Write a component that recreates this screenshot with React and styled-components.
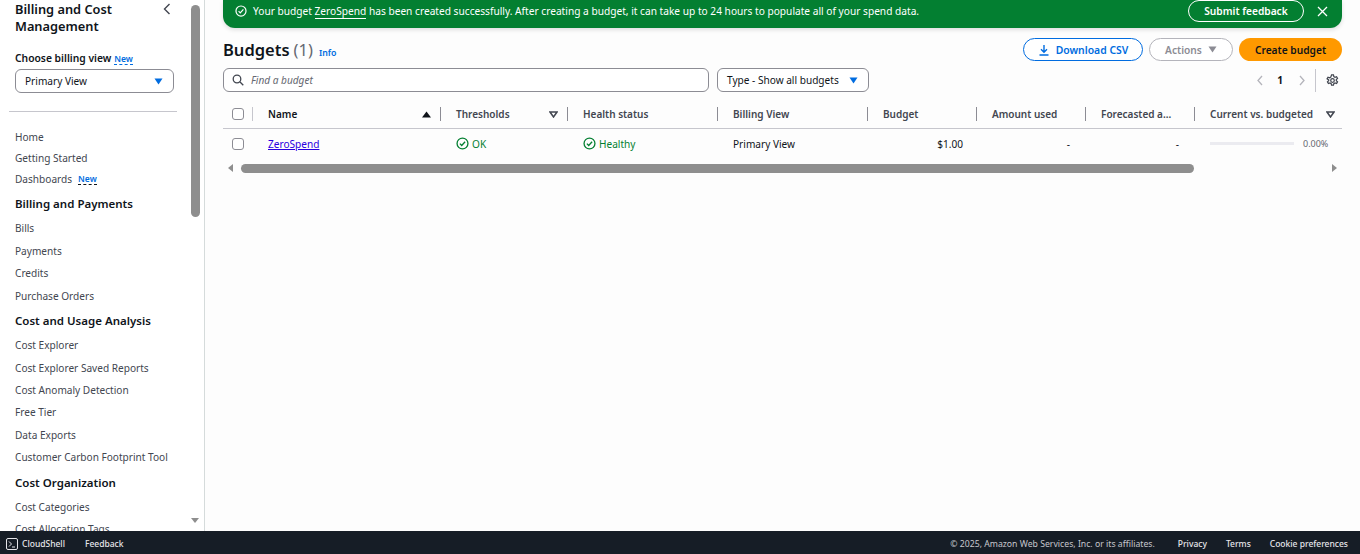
import React from "react";
import styled, { createGlobalStyle } from "styled-components";

const Global = createGlobalStyle`
  html, body { margin: 0; padding: 0; height: 100%; overflow: hidden; }
  body { font-family: "Noto Sans", "Open Sans", sans-serif; font-size: 10.1px; color: #16191f; background: #fdfdfd; }
  #root { height: 100%; }
`;
const Page = styled.div`display: flex; flex-direction: column; width: 1360px; height: 554px;`;
const Body = styled.div`display: flex; height: 531px; overflow: hidden;`;

const Side = styled.aside`position: relative; flex: 0 0 205px; height: 531px; box-sizing: border-box; overflow: hidden; background: #fff; border-right: 1px solid #d5dbdb; padding: 1px 0 0 15px;`;
const TitleRow = styled.div`display: flex; justify-content: space-between; width: 157px;`;
const Title = styled.h1`margin: 0; font-size: 12.8px; line-height: 17px; font-weight: 600; color: #0f141a; width: 130px;`;
const Back = styled.svg`width: 10px; height: 12px; margin-top: 2px; flex: none;`;
const ViewLabel = styled.div`display: flex; align-items: baseline; gap: 3px; margin-top: 16px; font-size: 10.3px; line-height: 15px; font-weight: 600; color: #0f141a;`;
const NewTag = styled.span`font-size: 8.5px; font-weight: 600; line-height: 11px; color: #006ce0; border-bottom: 1px dashed ${(p) => (p.$dark ? "#0f141a" : "#006ce0")}; margin-left: ${(p) => p.$gap || 0}px;`;
const Select = styled.div`box-sizing: border-box; display: flex; align-items: center; justify-content: space-between; height: 24px; border: 1px solid #8c8c94; border-radius: 6px; background: #fff; color: #0f141a; font-size: 10.1px; white-space: nowrap; padding: 0 10px 0 9px; width: ${(p) => p.$w}px; gap: 8px;`;
const ViewSelect = styled(Select)`margin-top: 3px;`;
const Caret = styled.svg`width: 9px; height: 7px; flex: none;`;
const Rule = styled.hr`margin: 18px 0 0 -6px; width: 168px; border: 0; border-top: 1px solid #c6c6cd;`;
const Nav = styled.nav`display: flex; flex-direction: column; margin-top: 14.8px;`;
const NavLink = styled.a`display: flex; align-items: center; height: ${(p) => p.$h || 22.45}px; font-size: 10.1px; color: #424650; white-space: nowrap;`;
const NavHead = styled.div`display: flex; align-items: center; height: 27.2px; font-size: 11.5px; font-weight: 600; color: #0f141a; white-space: nowrap;`;
const ScrollTrack = styled.div`position: absolute; top: 0; right: 4px; width: 10px; height: 531px;`;
const Thumb = styled.div`position: absolute; top: 5px; left: 1px; width: 9px; height: 212px; border-radius: 5px; background: #8e8e8e;`;
const ArrowDown = styled.div`position: absolute; top: 518px; left: 1px; width: 0; height: 0; border-left: 4.5px solid transparent; border-right: 4.5px solid transparent; border-top: 5px solid #8e8e8e;`;

const Main = styled.main`flex: 1; box-sizing: border-box; padding: 0 18px; background: #fdfdfd; min-width: 0;`;
const Flash = styled.div`display: flex; align-items: center; height: 28px; box-sizing: border-box; background: #037f31; color: #fff; border-radius: 0 0 12px 12px; padding: 0 12px 6px 12px; font-size: 10.17px; box-shadow: 0 2px 4px rgba(0,0,0,.12);`;
const FlashText = styled.span`margin-left: 6px; flex: 1; white-space: nowrap;`;
const FlashLink = styled.span`border-bottom: 1px solid #fff;`;
const Feedback = styled.div`box-sizing: border-box; width: 116px; height: 22px; margin-top: -1px; border: 1px solid #fff; border-radius: 12px; display: flex; align-items: center; justify-content: center; font-weight: 600; font-size: 10.2px;`;
const Close = styled.svg`width: 11px; height: 11px; margin: 0 2px 0 13px;`;
const HeadRow = styled.div`display: flex; align-items: center; justify-content: space-between; margin-top: 10px; height: 23px;`;
const Heading = styled.div`display: flex; align-items: baseline;`;
const H2 = styled.h2`margin: 0; font-size: 16.5px; font-weight: 600; color: #0f141a; line-height: 22px;`;
const Count = styled.span`font-size: 16.5px; color: #656871; margin-left: 4px;`;
const Info = styled.span`font-size: 8.8px; font-weight: 600; color: #006ce0; margin-left: 6px;`;
const Buttons = styled.div`display: flex; gap: 6px;`;
const Btn = styled.div`box-sizing: border-box; height: 23px; border-radius: 12px; display: flex; align-items: center; justify-content: center; gap: 6px; font-weight: 600; font-size: 10.2px; width: ${(p) => p.$w}px;
  ${(p) => p.$kind === "blue" && "border: 1px solid #006ce0; color: #006ce0; background: #fff; font-size: 10.4px;"}
  ${(p) => p.$kind === "off" && "border: 1px solid #b4b4bb; color: #8c8c94; background: #fff;"}
  ${(p) => p.$kind === "primary" && "background: #ff9900; color: #0f141a;"}
`;
const Tools = styled.div`display: flex; align-items: center; margin-top: 7px; height: 24px;`;
const Search = styled.div`box-sizing: border-box; display: flex; align-items: center; gap: 7px; width: 486px; height: 24px; border: 1px solid #8c8c94; border-radius: 6px; padding-left: 8px; background: #fff; font-style: italic; font-size: 10.1px; color: #656871;`;
const Filter = styled(Select)`margin-left: 8px;`;
const Pager = styled.div`margin-left: auto; display: flex; align-items: center; height: 24px; color: #0f141a; font-weight: 700; font-size: 10.1px;`;
const Chev = styled.svg`width: 8px; height: 11px;`;
const PageNum = styled.span`margin: 0 15px 0 13px;`;
const PagerRule = styled.span`width: 1px; height: 23px; background: #c6c6cd; margin: 0 10px 0 9px;`;
const Gear = styled.svg`width: 13px; height: 13px; margin-right: 3px;`;

const Table = styled.div`display: grid; grid-template-columns: 31px 187px 127px 150px 150px 109px 109px 109px 147px; width: 1119px; margin-top: 8px; overflow: hidden;`;
const Th = styled.div`box-sizing: border-box; position: relative; display: flex; align-items: center; justify-content: space-between; height: 29px; padding: 0 ${(p) => p.$pr ?? 10}px 0 ${(p) => p.$pl ?? 15}px; border-bottom: 1px solid #c6c6cd; font-weight: 600; font-size: 10px; white-space: nowrap; color: ${(p) => (p.$dark ? "#0f141a" : "#424650")};
  &::after { content: ""; display: ${(p) => (p.$last ? "none" : "block")}; position: absolute; right: ${(p) => (p.$light ? 1 : 0)}px; top: 7px; width: 1px; height: 14px; background: ${(p) => (p.$light ? "#c6c6cd" : "#8c8c94")}; }
`;
const Td = styled.div`box-sizing: border-box; display: flex; align-items: center; height: 31px; padding: 0 16px 2px 15px; gap: 3px; font-size: 10.1px; color: #0f141a; white-space: nowrap; justify-content: ${(p) => (p.$right ? "flex-end" : "flex-start")}; ${(p) => p.$green && "color: #037f31;"}`;
const CheckCell = styled(Td)`padding-right: 0;`;
const NameCell = styled(Td)`padding-left: 14px;`;
const Check = styled.span`display: block; flex: none; box-sizing: border-box; width: 12px; height: 12px; border: 1px solid #8c8c94; border-radius: 3px; background: #fff; margin-left: -6px;`;
const Link = styled.a`color: #2a00e0; text-decoration: underline;`;
const Bar = styled.div`flex: 1; height: 3px; background: #ebebf0; max-width: 84px;`;
const Pct = styled.span`font-size: 9px; color: #656871; margin-left: 6px;`;
const BudgetCell = styled(Td)`padding-right: 14px; padding-left: 0;`;
const ProgressCell = styled(Td)`padding-right: 0;`;
const HScroll = styled.div`display: flex; align-items: center; height: 14px; margin-top: 1px;`;
const HTrack = styled.div`flex: 1; margin: 0 9px 0 4px; height: 10px; position: relative;`;
const HThumb = styled.div`position: absolute; left: 4px; top: 1px; width: 953px; height: 9px; background: #8e8e8e; border-radius: 5px;`;
const Tri = styled.span`width: 0; height: 0; border-top: 4.5px solid transparent; border-bottom: 4.5px solid transparent; ${(p) => (p.$left ? "border-right: 5px solid #8e8e8e; margin-left: 5px;" : "border-left: 5px solid #8e8e8e; margin-right: 5px;")}`;

const Footer = styled.footer`flex: 0 0 23px; box-sizing: border-box; display: flex; align-items: center; background: #161d26; color: #d5dbdb; font-size: 8.7px; padding: 2px 12px 0 6px;`;
const FootLink = styled.span`font-weight: 500; font-size: 8.5px; white-space: nowrap; color: #e6e6ea; margin-left: ${(p) => p.$ml || 0}px;`;
const Legal = styled.span`margin-left: auto; color: #c6c6cd; white-space: nowrap;`;
const ShellIcon = styled.svg`width: 12px; height: 12px; margin-right: 4px;`;

const CheckCircle = ({ size = 13, color = "#037f31" }) => (
  <svg width={size} height={size} viewBox="0 0 16 16" fill="none" stroke={color} strokeWidth="1.6" style={{ flex: "none" }}>
    <circle cx="8" cy="8" r="6.7" />
    <path d="M4.8 8.2l2.2 2.2 4.2-4.6" />
  </svg>
);
const DownCaret = ({ color = "#006ce0" }) => (
  <Caret viewBox="0 0 9 7"><path d="M0.5 0.5h8L4.5 6.5z" fill={color} /></Caret>
);
const HollowDown = () => (
  <svg width="9" height="7" viewBox="0 0 9 7" style={{ flex: "none" }}><path d="M1 1h7L4.5 6z" fill="none" stroke="#424650" strokeWidth="1.5" /></svg>
);

const top = ["Home", "Getting Started"];
const billing = ["Bills", "Payments", "Credits", "Purchase Orders"];
const usage = ["Cost Explorer", "Cost Explorer Saved Reports", "Cost Anomaly Detection", "Free Tier", "Data Exports", "Customer Carbon Footprint Tool"];
const org = ["Cost Categories", "Cost Allocation Tags"];

export default function App() {
  return (
    <Page>
      <Global />
      <Body>
        <Side>
          <TitleRow>
            <Title>Billing and Cost Management</Title>
            <Back viewBox="0 0 10 12"><path d="M7.5 1L2.5 6l5 5" fill="none" stroke="#424650" strokeWidth="1.4" /></Back>
          </TitleRow>
          <ViewLabel>Choose billing view <NewTag>New</NewTag></ViewLabel>
          <ViewSelect $w={159}>Primary View <DownCaret /></ViewSelect>
          <Rule />
          <Nav>
            {top.map((l) => <NavLink key={l} $h={21}>{l}</NavLink>)}
            <NavLink $h={21}>Dashboards <NewTag $dark $gap={6}>New</NewTag></NavLink>
            <NavHead>Billing and Payments</NavHead>
            {billing.map((l) => <NavLink key={l}>{l}</NavLink>)}
            <NavHead>Cost and Usage Analysis</NavHead>
            {usage.map((l) => <NavLink key={l}>{l}</NavLink>)}
            <NavHead>Cost Organization</NavHead>
            {org.map((l) => <NavLink key={l}>{l}</NavLink>)}
          </Nav>
          <ScrollTrack><Thumb /><ArrowDown /></ScrollTrack>
        </Side>
        <Main>
          <Flash>
            <CheckCircle size={12} color="#fff" />
            <FlashText>Your budget <FlashLink>ZeroSpend</FlashLink> has been created successfully. After creating a budget, it can take up to 24 hours to populate all of your spend data.</FlashText>
            <Feedback>Submit feedback</Feedback>
            <Close viewBox="0 0 11 11"><path d="M1 1l9 9M10 1l-9 9" stroke="#fff" strokeWidth="1.3" /></Close>
          </Flash>
          <HeadRow>
            <Heading><H2>Budgets</H2><Count>(1)</Count><Info>Info</Info></Heading>
            <Buttons>
              <Btn $kind="blue" $w={120}>
                <svg width="12" height="12" viewBox="0 0 12 12" fill="none" stroke="#006ce0" strokeWidth="1.4"><path d="M6 1v7M3 5.2L6 8.2l3-3M1.5 11h9" /></svg>
                Download CSV
              </Btn>
              <Btn $kind="off" $w={84}>Actions <DownCaret color="#8c8c94" /></Btn>
              <Btn $kind="primary" $w={103}>Create budget</Btn>
            </Buttons>
          </HeadRow>
          <Tools>
            <Search>
              <svg width="12" height="12" viewBox="0 0 12 12" fill="none" stroke="#424650" strokeWidth="1.3"><circle cx="5" cy="5" r="3.8" /><path d="M8 8l3.3 3.3" /></svg>
              Find a budget
            </Search>
            <Filter $w={152}>Type - Show all budgets <DownCaret /></Filter>
            <Pager>
              <Chev viewBox="0 0 8 11"><path d="M6 1L2 5.500 6 10" fill="none" stroke="#b4b4bb" strokeWidth="1.3" /></Chev>
              <PageNum>1</PageNum>
              <Chev viewBox="0 0 8 11"><path d="M2 1l4 4.500L2 10" fill="none" stroke="#b4b4bb" strokeWidth="1.3" /></Chev>
              <PagerRule />
              <Gear viewBox="0 0 16 16" fill="none" stroke="#424650" strokeWidth="1.5">
                <circle cx="8" cy="8" r="2.2" />
                <path d="M6.800 1.200h2.400l.4 2 1.500.8 1.900-.7 1.200 2.100-1.500 1.300v1.600l1.500 1.300-1.200 2.100-1.900-.7-1.500.8-.4 2H6.800l-.4-2-1.500-.8-1.900.7-1.200-2.100 1.500-1.300V7.300L1.300 6l1.200-2.100 1.900.7 1.500-.8z" />
              </Gear>
            </Pager>
          </Tools>
          <Table>
            <Th $pl={15} $pr={0} $light><Check /></Th>
            <Th $dark $pl={14}>Name <svg width="9" height="7" viewBox="0 0 9 7"><path d="M4.500 0.500L9 6.500H0z" fill="#0f141a" /></svg></Th>
            <Th>Thresholds <HollowDown /></Th>
            <Th>Health status</Th>
            <Th>Billing View</Th>
            <Th>Budget</Th>
            <Th>Amount used</Th>
            <Th>Forecasted a...</Th>
            <Th $last $pr={7}>Current vs. budgeted <HollowDown /></Th>

            <CheckCell><Check /></CheckCell>
            <NameCell><Link>ZeroSpend</Link></NameCell>
            <Td $green><CheckCircle />OK</Td>
            <Td $green><CheckCircle />Healthy</Td>
            <Td>Primary View</Td>
            <BudgetCell $right>$1.00</BudgetCell>
            <Td $right>-</Td>
            <Td $right>-</Td>
            <ProgressCell><Bar /><Pct>0.00%</Pct></ProgressCell>
          </Table>
          <HScroll>
            <Tri $left />
            <HTrack><HThumb /></HTrack>
            <Tri />
          </HScroll>
        </Main>
      </Body>
      <Footer>
        <ShellIcon viewBox="0 0 12 12" fill="none" stroke="#e6e6ea" strokeWidth="1"><rect x="0.500" y="0.500" width="11" height="11" rx="1.500" /><path d="M3 3.500L5.500 6 3 8.500M6 9h3" /></ShellIcon>
        <FootLink>CloudShell</FootLink>
        <FootLink $ml={20}>Feedback</FootLink>
        <Legal>© 2025, Amazon Web Services, Inc. or its affiliates.</Legal>
        <FootLink $ml={23}>Privacy</FootLink>
        <FootLink $ml={19}>Terms</FootLink>
        <FootLink $ml={19}>Cookie preferences</FootLink>
      </Footer>
    </Page>
  );
}
